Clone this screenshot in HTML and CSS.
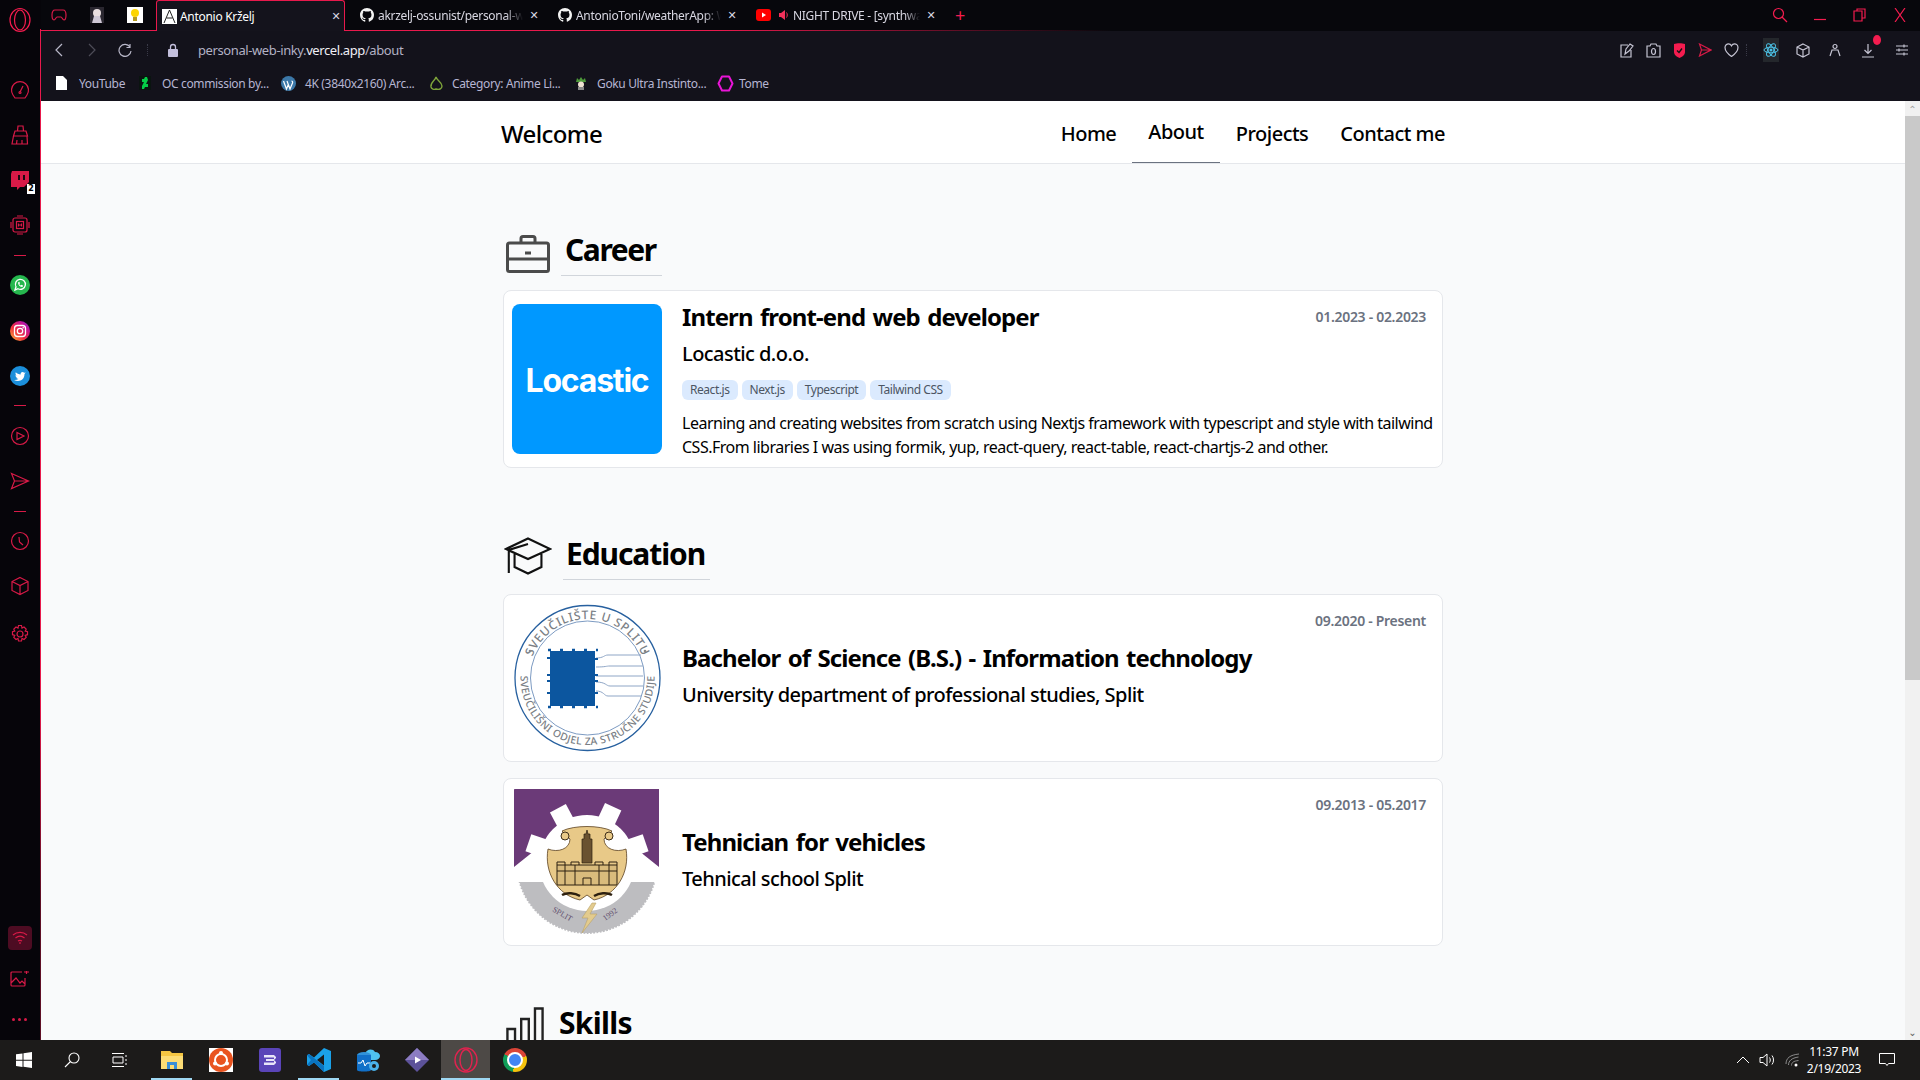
FILE: index.html
```html
<!DOCTYPE html>
<html lang="en">
<head>
<meta charset="utf-8">
<title>Antonio Krželj</title>
<link rel="stylesheet" href="styles.css">
</head>
<body>
<div class="desktop">
  <aside class="sidebar">
    <div class="side-logo"><svg width="24" height="26" viewBox="0 0 24 26" class="ic-p"><ellipse cx="12" cy="13" rx="10" ry="11.5"/><ellipse cx="12" cy="13" rx="5.5" ry="10"/></svg></div>
    <div class="side-group">
      <div class="side-item"><svg width="20" height="20" viewBox="0 0 20 20" class="ic-d"><path d="M3 15a8.500 8.500 0 1 1 14 0l-2 3H5z"/><path d="M10 12l3-6"/><circle cx="10" cy="12.500" r="1"/></svg></div>
      <div class="side-item"><svg width="20" height="20" viewBox="0 0 20 20" class="ic-d"><path d="M8 1h5l.5 5H7.500zM5 6h11l1.500 5H3.500zM3.500 11L2 19h15.500l-.5-8M7 15l-.5 4M12 15v4"/></svg></div>
      <div class="side-item"><svg width="22" height="22" viewBox="0 0 22 22" class="ic-f"><path d="M3 2h17v11l-5 5h-4l-3 3v-3H2V5z"/><path d="M10 6v5M15 6v5" class="ic-cut"/></svg><span class="side-badge">2</span></div>
      <div class="side-item"><svg width="20" height="20" viewBox="0 0 20 20" class="ic-d"><rect x="3" y="3" width="14" height="14" rx="2"/><rect x="6.500" y="6.500" width="7" height="7"/><path d="M8.500 8.500v3M11.500 8.500v3M8.500 10h3M1 7v6M19 7v6M7 1h6M7 19h6"/></svg></div>
      <div class="side-rule"></div>
      <div class="side-item"><svg width="20" height="20" viewBox="0 0 20 20"><circle cx="10" cy="10" r="10" fill="#25b74e"/><path d="M5 15l1-3.300a5 5 0 1 1 2 2z" fill="none" stroke="#fff" stroke-width="1.300"/><path d="M8 7.500c0 2.500 2 4.500 4.500 4.500l.5-1.500-1.500-.7-.7.7c-.7-.3-1.200-.8-1.500-1.500l.7-.7L9.300 6.800z" fill="#fff"/></svg></div>
      <div class="side-item"><svg width="20" height="20" viewBox="0 0 20 20"><defs><linearGradient id="ig" x1="0" y1="1" x2="1" y2="0"><stop offset="0" stop-color="#fdc13a"/><stop offset=".4" stop-color="#f0303c"/><stop offset=".75" stop-color="#c3139a"/><stop offset="1" stop-color="#6a35d0"/></linearGradient></defs><circle cx="10" cy="10" r="10" fill="url(#ig)"/><rect x="4.500" y="4.500" width="11" height="11" rx="3" fill="none" stroke="#fff" stroke-width="1.300"/><circle cx="10" cy="10" r="2.700" fill="none" stroke="#fff" stroke-width="1.300"/><circle cx="13.200" cy="6.800" r=".8" fill="#fff"/></svg></div>
      <div class="side-item"><svg width="20" height="20" viewBox="0 0 20 20"><circle cx="10" cy="10" r="10" fill="#1b8fdb"/><path d="M4 14c5 2.500 10.500 0 10.500-6l1.200-1.500-1.600.3c-1-1.300-3.600-.8-3.500 1.600-1.800 0-3.500-.8-4.800-2.200-.6 1.200-.3 2.500.7 3.200l-1.100-.2c0 1.200.8 2 1.900 2.400h-1c.4 1 1.200 1.400 2.200 1.500-1.200.8-2.800 1-4.500.9z" fill="#fff"/></svg></div>
      <div class="side-rule"></div>
      <div class="side-item"><svg width="20" height="20" viewBox="0 0 20 20" class="ic-d"><circle cx="10" cy="10" r="8.500"/><path d="M7 6.500l7 3.500-7 3.500z"/></svg></div>
      <div class="side-item"><svg width="20" height="20" viewBox="0 0 20 20" class="ic-d"><path d="M1.500 2.500l17 7.500-17 7.500 3-7.500zM4.500 10h14"/></svg></div>
      <div class="side-rule"></div>
      <div class="side-item"><svg width="20" height="20" viewBox="0 0 20 20" class="ic-d"><circle cx="10" cy="10" r="8.500"/><path d="M9 6l.5 5 3.500 3"/></svg></div>
      <div class="side-item"><svg width="20" height="20" viewBox="0 0 20 20" class="ic-d"><path d="M10 1.500l8 4v9l-8 4-8-4v-9zM2 5.500l8 4 8-4M10 9.500v9"/></svg></div>
      <div class="side-item"><svg width="20" height="20" viewBox="0 0 20 20" class="ic-d"><circle cx="10" cy="10" r="3"/><path d="M8.500 1.500h3l.5 2.500 2-1 2.200 2.200-1 2 2.300.5v3l-2.300.6 1 2-2.200 2.200-2-1-.5 2.500h-3l-.5-2.500-2 1-2.200-2.200 1-2-2.300-.6v-3l2.300-.5-1-2L6 3l2 1z"/></svg></div>
    </div>
    <div class="side-bottom">
      <div class="side-wifi"><svg width="16" height="14" viewBox="0 0 16 14" class="ic-d"><path d="M1 4c4-3.500 10-3.500 14 0M3.500 7c3-2.500 6-2.500 9 0M6 10c1.500-1 2.500-1 4 0M8 11v2"/></svg></div>
      <div class="side-pic"><svg width="20" height="16" viewBox="0 0 20 16" class="ic-d"><path d="M12 1H2a1 1 0 0 0-1 1v12a1 1 0 0 0 1 1h12a1 1 0 0 0 1-1V7M1 12l5-5 4 5 2-2 3 3M14 1h5M16.500 0v3"/></svg></div>
      <div class="side-dots"><i></i><i></i><i></i></div>
    </div>
  </aside>

  <div class="browser">
    <div class="tabstrip">
      <div class="pin pin-1"><svg width="16" height="12" viewBox="0 0 16 12" class="ic-d"><path d="M4 1h8c2 0 3 2 3 5s-.5 5-2 5-2-3-3-3H6c-1 0-1.500 3-3 3S1 9 1 6s1-5 3-5z"/></svg></div>
      <div class="pin pin-2"><svg width="14" height="16" viewBox="0 0 14 16"><rect width="14" height="16" fill="#2a2730"/><circle cx="7" cy="6" r="4" fill="#e9dfe0"/><path d="M2 16l2-7h6l2 7z" fill="#cfc8d6"/></svg></div>
      <div class="pin pin-3"><svg width="16" height="16" viewBox="0 0 16 16"><rect width="16" height="16" fill="#fff"/><circle cx="8" cy="6" r="4" fill="#fdd500"/><rect x="6" y="10" width="4" height="4" fill="#b59a20"/></svg></div>
      <div class="tab tab-active">
        <svg width="15" height="15" viewBox="0 0 15 15"><rect width="15" height="15" fill="#fff"/><path d="M2 14L7.500 1 13 14M4.500 9h6" fill="none" stroke="#222" stroke-width="1"/></svg>
        <span class="tab-title">Antonio Krželj</span><span class="tab-x">✕</span>
      </div>
      <div class="tab">
        <svg width="14" height="14" viewBox="0 0 16 16" class="gh"><path d="M8 0C3.580 0 0 3.580 0 8c0 3.540 2.290 6.530 5.470 7.590.4.07.55-.17.55-.38 0-.19-.01-.82-.01-1.490-2.010.37-2.530-.49-2.690-.94-.09-.23-.48-.94-.82-1.130-.28-.15-.68-.52-.01-.53.63-.01 1.080.58 1.230.82.72 1.210 1.870.87 2.330.66.07-.52.28-.87.51-1.070-1.780-.2-3.640-.89-3.640-3.950 0-.87.31-1.590.82-2.150-.08-.2-.36-1.020.08-2.120 0 0 .67-.21 2.200.82.64-.18 1.320-.27 2-.27.68 0 1.360.09 2 .27 1.530-1.040 2.200-.82 2.200-.82.44 1.100.16 1.920.08 2.120.51.56.82 1.270.82 2.150 0 3.070-1.870 3.750-3.650 3.950.29.25.54.73.54 1.480 0 1.070-.01 1.930-.01 2.200 0 .21.15.46.55.38A8.013 8.013 0 0 0 16 8c0-4.420-3.580-8-8-8z"/></svg>
        <span class="tab-title">akrzelj-ossunist/personal-w</span><span class="tab-x">✕</span>
      </div>
      <div class="tab">
        <svg width="14" height="14" viewBox="0 0 16 16" class="gh"><path d="M8 0C3.580 0 0 3.580 0 8c0 3.540 2.290 6.530 5.470 7.590.4.07.55-.17.55-.38 0-.19-.01-.82-.01-1.490-2.010.37-2.530-.49-2.690-.94-.09-.23-.48-.94-.82-1.130-.28-.15-.68-.52-.01-.53.63-.01 1.080.58 1.230.82.72 1.210 1.870.87 2.330.66.07-.52.28-.87.51-1.070-1.780-.2-3.640-.89-3.640-3.950 0-.87.31-1.590.82-2.150-.08-.2-.36-1.020.08-2.120 0 0 .67-.21 2.200.82.64-.18 1.320-.27 2-.27.68 0 1.360.09 2 .27 1.530-1.040 2.200-.82 2.200-.82.44 1.100.16 1.920.08 2.120.51.56.82 1.270.82 2.150 0 3.070-1.870 3.750-3.650 3.950.29.25.54.73.54 1.480 0 1.070-.01 1.930-.01 2.200 0 .21.15.46.55.38A8.013 8.013 0 0 0 16 8c0-4.420-3.580-8-8-8z"/></svg>
        <span class="tab-title">AntonioToni/weatherApp: W</span><span class="tab-x">✕</span>
      </div>
      <div class="tab tab-media">
        <svg width="15" height="12" viewBox="0 0 15 12"><rect width="15" height="12" rx="3" fill="#f00"/><path d="M6 3.500l4 2.500-4 2.500z" fill="#fff"/></svg>
        <svg class="tab-spk" width="10" height="12" viewBox="0 0 10 12"><path d="M0 4h2l4-3v10L2 8H0z" fill="#f4305a"/><path d="M7.500 3.500c1 1.500 1 3.500 0 5" fill="none" stroke="#f4305a"/></svg>
        <span class="tab-title">NIGHT DRIVE - [synthwa</span><span class="tab-x">✕</span>
      </div>
      <span class="tab-add">+</span>
      <div class="win">
        <svg width="16" height="16" viewBox="0 0 16 16" class="ic-p win-search"><circle cx="6.500" cy="6.500" r="5"/><path d="M10 10l5 5"/></svg>
        <svg width="12" height="12" viewBox="0 0 12 12" class="ic-p win-min"><path d="M0 10.500h12"/></svg>
        <svg width="14" height="14" viewBox="0 0 14 14" class="ic-p win-res"><path d="M4 3V1h8v9h-3M1 3h8v10H1z"/></svg>
        <svg width="14" height="14" viewBox="0 0 14 14" class="ic-p win-close"><path d="M2 0l10 14M12 0L2 14"/></svg>
      </div>
    </div>

    <div class="toolbar">
      <div class="tb-btn"><svg width="10" height="16" viewBox="0 0 10 16" class="ic-g"><path d="M8 2L2 8l6 6"/></svg></div>
      <div class="tb-btn tb-off"><svg width="10" height="16" viewBox="0 0 10 16" class="ic-g"><path d="M2 2l6 6-6 6"/></svg></div>
      <div class="tb-btn"><svg width="14" height="14" viewBox="0 0 14 14" class="ic-g"><path d="M12 4a6 6 0 1 0 1 4M12 1v3.500H8.500"/></svg></div>
      <div class="tb-sep"></div>
      <div class="tb-lock"><svg width="12" height="14" viewBox="0 0 12 14"><rect x="1" y="6" width="10" height="8" rx="1" fill="#c3bfdc"/><path d="M3.500 6V4a2.500 2.500 0 0 1 5 0v2" fill="none" stroke="#c3bfdc" stroke-width="1.300"/></svg></div>
      <div class="url">personal-web-inky.<b>vercel.app</b>/about</div>
      <div class="tb-right">
        <div class="tb-icon"><svg width="14" height="16" viewBox="0 0 14 16" class="ic-w"><path d="M8 3H1v12h10V8M5 12l1-5 4-5 3 2-4 5z"/></svg></div>
        <div class="tb-icon"><svg width="15" height="15" viewBox="0 0 15 15" class="ic-w"><path d="M1 3h3l1-2h5l1 2h3v11H1z"/><ellipse cx="7.500" cy="8.500" rx="2" ry="3"/></svg></div>
        <div class="tb-icon"><svg width="13" height="15" viewBox="0 0 13 15"><path d="M1 1c3-1 8-1 11 0v8c0 3-3 5-5.500 6C4 14 1 12 1 9z" fill="#f41c4f"/><path d="M4 7.500l2 2 3-4" fill="none" stroke="#111" stroke-width="1.400"/></svg></div>
        <div class="tb-icon"><svg width="14" height="14" viewBox="0 0 14 14" class="ic-d"><path d="M1.500 1l11.500 6-11.500 6 2-6zM3.500 7H13"/></svg></div>
        <div class="tb-icon"><svg width="15" height="14" viewBox="0 0 15 14" class="ic-w"><path d="M7.500 13.500C4 11 1 8 1 4.500 1 2 3 .8 4.500.8c1.300 0 2.400.8 3 2 .6-1.200 1.700-2 3-2C12 .8 14 2 14 4.500c0 3.500-3 6.500-6.500 9z"/></svg></div>
        <div class="tb-dotsep"></div>
        <div class="tb-icon tb-icon-wide"><span class="react"><svg width="16" height="16" viewBox="0 0 16 16"><g fill="none" stroke="#4cc3e8" stroke-width="1"><ellipse cx="8" cy="8" rx="7" ry="2.800"/><ellipse cx="8" cy="8" rx="7" ry="2.800" transform="rotate(60 8 8)"/><ellipse cx="8" cy="8" rx="7" ry="2.800" transform="rotate(120 8 8)"/></g><circle cx="8" cy="8" r="1.500" fill="#4cc3e8"/></svg></span></div>
        <div class="tb-icon tb-icon-wide"><svg width="14" height="15" viewBox="0 0 14 15" class="ic-w"><path d="M7 1l6 3v7l-6 3-6-3V4zM1 4l6 3 6-3M7 7v7"/></svg></div>
        <div class="tb-icon tb-icon-wide"><svg width="12" height="14" viewBox="0 0 12 14" class="ic-w"><circle cx="6" cy="3.500" r="2"/><path d="M1 13l2-6h6l2 6"/></svg></div>
        <div class="tb-icon tb-icon-wide tb-dl"><svg width="14" height="15" viewBox="0 0 14 15" class="ic-w"><path d="M7 1v9M3.500 7L7 10.500 10.500 7M1 14h12"/></svg><span class="dl-dot"></span></div>
        <div class="tb-icon tb-icon-wide tb-last"><svg width="14" height="12" viewBox="0 0 14 12" class="ic-w"><path d="M1 2h12M1 6h12M1 10h12M9 .5v3M4 4.500v3M9 8.500v3"/></svg></div>
      </div>
    </div>

    <div class="bookmarks">
      <a class="bm bm-1"><svg width="11" height="14" viewBox="0 0 11 14"><path d="M0 0h7l4 4v10H0z" fill="#fff"/></svg><span>YouTube</span></a>
      <a class="bm bm-2"><svg width="12" height="14" viewBox="0 0 12 14"><rect width="12" height="14" fill="#0a1410"/><path d="M8 1H6L5 3H3v3h2L3 10v3h2l1-2h3V8H7l2-4z" fill="#05cc47"/></svg><span>OC commission by...</span></a>
      <a class="bm bm-3"><svg width="15" height="15" viewBox="0 0 15 15"><circle cx="7.500" cy="7.500" r="7.500" fill="#3c78a8"/><path d="M2.500 5l3 8 1.800-4.500L6 5M6 5l3 8 2.500-6c.5-1-.2-2-1-2" fill="none" stroke="#fff" stroke-width="1.200"/></svg><span>4K (3840x2160) Arc...</span></a>
      <a class="bm bm-4"><svg width="15" height="15" viewBox="0 0 15 15"><path d="M7 1c-1 4-6 5-5 10 .5 2 3 3 5 2 3 1 6 0 6-3 0-4-5-5-6-9z" fill="none" stroke="#7ea43a" stroke-width="1.400"/></svg><span>Category: Anime Li...</span></a>
      <a class="bm bm-5"><svg width="14" height="14" viewBox="0 0 14 14"><path d="M2 6l1-4 2 2 2-3 2 3 2-2 1 4z" fill="#4e9a3a"/><circle cx="7" cy="8.500" r="3" fill="#efe2d2"/><rect x="4" y="11" width="6" height="3" fill="#8a8a8a"/></svg><span>Goku Ultra Instinto...</span></a>
      <a class="bm bm-6"><svg width="17" height="17" viewBox="0 0 17 17"><path d="M5 1.500h7l3.500 7-3.500 7H5l-3.500-7z" fill="none" stroke="#e815d6" stroke-width="2" stroke-linejoin="round"/></svg><span>Tome</span></a>
    </div>

    <div class="viewport">
      <div class="page">
        <header class="nav">
          <div class="nav-inner">
            <div class="brand">Welcome</div>
            <nav class="links">
              <a class="link">Home</a>
              <a class="link link-active">About</a>
              <a class="link">Projects</a>
              <a class="link">Contact me</a>
            </nav>
          </div>
        </header>
        <main class="content">
          <section class="section">
            <div class="heading">
              <svg class="h-icon" width="44" height="38" viewBox="0 0 44 38" fill="none" stroke="#4b4b4b" stroke-width="3"><rect x="1.500" y="8" width="41" height="28.500" rx="2"/><path d="M1.500 24h41M15 8V3.500a2 2 0 0 1 2-2h10a2 2 0 0 1 2 2V8M19 18h6"/></svg>
              <h2 class="title title-career">Career</h2>
            </div>
            <article class="card card-job">
              <div class="thumb thumb-blue"><svg width="150" height="150" viewBox="0 0 150 150"><text x="75" y="88" class="locastic" text-anchor="middle">Locastic</text></svg></div>
              <div class="body body-job">
                <h3 class="job">Intern front-end web developer</h3>
                <p class="org">Locastic d.o.o.</p>
                <ul class="tags"><li class="tag">React.js</li><li class="tag">Next.js</li><li class="tag">Typescript</li><li class="tag">Tailwind CSS</li></ul>
                <p class="desc">Learning and creating websites from scratch using Nextjs framework with typescript and style with tailwind CSS.From libraries I was using formik, yup, react-query, react-table, react-chartjs-2 and other.</p>
              </div>
              <span class="date">01.2023 - 02.2023</span>
            </article>
          </section>

          <section class="section">
            <div class="heading">
              <svg class="h-icon h-icon-edu" width="48" height="38" viewBox="0 0 50 38" preserveAspectRatio="none" fill="none" stroke="#111" stroke-width="2.200"><path d="M25 1.500L48 12 25 22 2 12zM11 17v13l14 6.500L39 30V17M25 7L5 13v23"/></svg>
              <h2 class="title title-edu">Education</h2>
            </div>
            <article class="card">
              <div class="thumb">
                <svg width="150" height="150" viewBox="0 0 150 150">
                  <defs>
                    <path id="arcTop" d="M20.100 54.800A59 59 0 0 1 130.900 54.800"/>
                    <path id="arcBot" d="M10.500 58.800A67 67 0 1 0 140.500 58.800"/>
                  </defs>
                  <circle cx="75.500" cy="75" r="72.500" fill="#fff" stroke="#27609f" stroke-width="1.300"/>
                  <circle cx="75.500" cy="75" r="57" fill="none" stroke="#5c82b3" stroke-width=".8"/>
                  <text class="seal seal-top" text-anchor="middle"><textPath href="#arcTop" startOffset="50%">SVEUČILIŠTE U SPLITU</textPath></text>
                  <text class="seal" text-anchor="middle"><textPath href="#arcBot" startOffset="50%">SVEUČILIŠNI ODJEL ZA STRUČNE STUDIJE</textPath></text>
                  <circle cx="18" cy="48" r="1.300" fill="#888"/><circle cx="133" cy="48" r="1.300" fill="#888"/>
                  <path d="M84 55c8 0 8-3 12-3h33M84 64c10 0 10-1 14-1h33M84 73h47M84 79c10 0 10 4 14 4h33M84 88c8 0 8 5 12 5h33" fill="none" stroke="#8fa6c6" stroke-width="1"/>
                  <rect x="38" y="48" width="45" height="55" fill="#0c569f"/>
                  <path d="M36 47h50M36 104h50" stroke="#0c569f" stroke-width="2.500" stroke-dasharray="3 9"/>
                  <path d="M35 55h5M35 72h5M35 78h5M35 90h5M81 56h5M81 72h5M81 78h5M81 90h5" stroke="#0c569f" stroke-width="2"/>
                </svg>
              </div>
              <div class="body body-edu">
                <h3 class="job">Bachelor of Science (B.S.) - Information technology</h3>
                <p class="org">University department of professional studies, Split</p>
              </div>
              <span class="date">09.2020 - Present</span>
            </article>
            <article class="card card-next">
              <div class="thumb">
                <svg width="150" height="150" viewBox="0 0 150 150">
                  <rect x="2" y="2" width="145" height="78" fill="#6b3a78"/>
                  <path d="M2 80L22 64l24 16zM147 80l-20-16-24 16z" fill="#fff"/>
                  <path d="M6.600 95H143.400A71 71 0 0 1 6.600 95z" fill="#bdbdc0"/>
                  <path d="M143.400 95A71 71 0 0 1 6.600 95" fill="none" stroke="#fff" stroke-width="2" stroke-dasharray="1.500 1.800"/>
                  <g fill="#fff">
                    <circle cx="75" cy="76" r="48"/>
                    <rect x="66" y="14" width="18" height="24" transform="rotate(-28 75 76)"/>
                    <rect x="66" y="14" width="18" height="24" transform="rotate(25 75 76)"/>
                    <rect x="66" y="14" width="18" height="24" transform="rotate(-71 75 76)"/>
                    <rect x="66" y="14" width="18" height="24" transform="rotate(71 75 76)"/>
                  </g>
                  <path d="M50 44C62 38 88 38 100 44L92 52C92 62 104 66 114 62 118 85 105 108 82 113L75 108 68 113C45 108 32 85 36 62 46 66 58 62 58 52z" fill="#e8c988" stroke="#5a4020" stroke-width=".8"/>
                  <circle cx="53" cy="49" r="4" fill="#e8c988" stroke="#3d2d18"/><circle cx="97" cy="49" r="4" fill="#e8c988" stroke="#3d2d18"/>
                  <path d="M70 76V52h2v-5h2l1-4 1 4h2v5h2v24z" fill="#6a5230" stroke="#2d2010" stroke-width=".7"/>
                  <path d="M45 78h60v20H45z" fill="#d9bb7c" stroke="#2d2010" stroke-width="1"/>
                  <path d="M45 78v-3h8v3M59 78v-3h8v3M83 78v-3h8v3M97 78v-3h8v3M53 78v20M63 78v20M87 78v20M97 78v20M45 84h60M71 98v-7h8v7" fill="none" stroke="#2d2010" stroke-width="1"/>
                  <path d="M50 108c5-3 13-2 18 1M100 108c-5-3-13-2-18 1" stroke="#2d2010" stroke-width="2.500" fill="none"/>
                  <path d="M80 116l-10 15h6l-6 15 15-19h-7l6-11z" fill="#e3cb8e" stroke="#b9a36a" stroke-width=".6"/>
                  <text x="40" y="124" class="tiny" transform="rotate(30 40 124)">SPLIT</text>
                  <text x="93" y="134" class="tiny" transform="rotate(-35 93 134)">1992</text>
                </svg>
              </div>
              <div class="body body-edu">
                <h3 class="job">Tehnician for vehicles</h3>
                <p class="org">Tehnical school Split</p>
              </div>
              <span class="date">09.2013 - 05.2017</span>
            </article>
          </section>

          <section class="section section-skills">
            <div class="heading heading-skills">
              <svg class="h-icon h-icon-skills" width="38" height="36" viewBox="0 0 40 36" preserveAspectRatio="none" fill="none" stroke="#222" stroke-width="2.500"><rect x="1.500" y="22" width="8" height="20"/><rect x="16" y="12" width="8" height="30"/><rect x="30.500" y="1.500" width="8" height="40"/></svg>
              <h2 class="title title-skills">Skills</h2>
            </div>
          </section>
        </main>
      </div>
      <div class="scrollbar">
        <div class="sb-arrow">⌃</div>
        <div class="sb-thumb"></div>
        <div class="sb-track"></div>
        <div class="sb-arrow sb-arrow-down">⌄</div>
      </div>
    </div>
  </div>
</div>

<footer class="taskbar">
  <div class="task"><svg width="16" height="16" viewBox="0 0 16 16"><path d="M0 2.300l6.500-.9v6.300H0zM7.500 1.300L16 0v7.700H7.500zM0 8.700h6.500V15L0 14.100zM7.500 8.700H16V16l-8.500-1.200z" fill="#fff"/></svg></div>
  <div class="task"><svg width="16" height="16" viewBox="0 0 16 16" fill="none" stroke="#fff" stroke-width="1.100"><circle cx="10" cy="6" r="5"/><path d="M6.500 9.500L1 15"/></svg></div>
  <div class="task"><svg width="16" height="16" viewBox="0 0 16 16" fill="none" stroke="#fff"><path d="M0 1.500h12M0 14.500h12M1 5h10v6H1zM14 3v2M14 7v2M14 11v2"/></svg></div>
  <div class="task task-on"><svg width="22" height="20" viewBox="0 0 22 20"><path d="M0 1h9l2 2h11v16H0z" fill="#f5c643"/><path d="M0 6h22v13H0z" fill="#fcdc75"/><path d="M6 12h10v7H6z" fill="#3a8fd8"/><path d="M9 15h4v4H9z" fill="#fcdc75"/></svg></div>
  <div class="task"><svg width="24" height="24" viewBox="0 0 24 24"><rect width="24" height="24" fill="#fff"/><circle cx="12" cy="12" r="12" fill="#e95420"/><circle cx="12" cy="12" r="6" fill="none" stroke="#fff" stroke-width="2"/><circle cx="12" cy="5" r="2" fill="#fff"/><circle cx="6" cy="15.500" r="2" fill="#fff"/><circle cx="18" cy="15.500" r="2" fill="#fff"/></svg></div>
  <div class="task"><svg width="22" height="24" viewBox="0 0 22 24"><rect width="22" height="24" rx="3" fill="#5a44b8"/><path d="M5 7h10l2 2v1l-2 2 2 2v1l-2 2H5v-2.500h10V13H7v-2h8V9.500H5z" fill="#e8e4f8"/></svg></div>
  <div class="task task-on"><svg width="24" height="24" viewBox="0 0 24 24"><path d="M17 0l7 3v18l-7 3-10-9.500L2 18l-2-1.200V7.200L2 6l5 3.500z" fill="#1aa1e8"/><path d="M17 6.500L10 12l7 5.500z" fill="#1c1b1a"/><path d="M0 7.200L2 6l15 12v6L7 14.500 2 18l-2-1.200 4-4.800z" fill="#0a74c0"/></svg></div>
  <div class="task"><svg width="24" height="26" viewBox="0 0 24 26"><path d="M9 7c1-5 8-6 10-2 3 0 5 2 5 4s-2 4-5 4H9z" fill="#4fc3f0"/><ellipse cx="8" cy="8" rx="7" ry="3" fill="#3192d8"/><path d="M1 8h14v15c0 2-14 2-14 0z" fill="#1170c8"/><path d="M2 16h3l2-3 2 6 2-3h3" fill="none" stroke="#fff" stroke-width="1"/><circle cx="18" cy="19" r="5" fill="#4ab1e8"/><circle cx="18" cy="19" r="2" fill="#1c1b1a"/></svg></div>
  <div class="task"><svg width="24" height="24" viewBox="0 0 24 24"><path d="M12 0l12 12-12 12L0 12z" fill="#5c5299"/><path d="M12 0l12 12H0z" fill="#8c7cc2"/><path d="M10 8.500l6 3.500-6 3.500z" fill="#fff"/></svg></div>
  <div class="task task-active"><svg width="24" height="26" viewBox="0 0 24 26" fill="none" stroke="#e0234f" stroke-width="1.400"><ellipse cx="12" cy="13" rx="11" ry="12"/><ellipse cx="12" cy="13" rx="6" ry="10.500"/></svg></div>
  <div class="task"><span class="chrome"><span class="chrome-dot"></span></span></div>
  <div class="tray">
    <svg width="14" height="8" viewBox="0 0 14 8" fill="none" stroke="#fff"><path d="M1 7l6-6 6 6"/></svg>
    <svg class="tray-vol" width="18" height="14" viewBox="0 0 18 14" fill="none" stroke="#fff"><path d="M1 4.500h3l4-3.500v12l-4-3.500H1zM10.500 4.500c1 1.500 1 3.500 0 5M13 2.500c2 2.500 2 6.500 0 9"/></svg>
    <svg class="tray-wifi" width="16" height="14" viewBox="0 0 16 14" fill="none" stroke="#8b8b8b"><path d="M1 11c0-6 4-9 13-10M3.500 12c0-4 3-7 10-8M6.500 12.500c0-3 2-4.500 7-5"/><circle cx="11" cy="12" r="1.500" fill="#fff" stroke="none"/></svg>
    <div class="clock"><span>11:37 PM</span><span>2/19/2023</span></div>
    <svg class="tray-msg" width="16" height="14" viewBox="0 0 16 14" fill="none" stroke="#fff"><path d="M.5.500h15v10H9.500L8 12.500 6.500 10.500H.5z"/></svg>
  </div>
</footer>
</body>
</html>
```

FILE: styles.css
```css
* { box-sizing: border-box; }
html, body { height: 100%; }
body {
  margin: 0;
  height: 100vh;
  overflow: hidden;
  display: flex;
  flex-direction: column;
  font-family: "Noto Sans", "Open Sans", sans-serif;
  background: #07070c;
}
h2, h3, p, ul { margin: 0; padding: 0; }
ul { list-style: none; }
svg { display: block; flex: none; }

/* stroke helpers */
.ic-p, .ic-d, .ic-g, .ic-w { fill: none; stroke-width: 1.200; }
.ic-p { stroke: #f41c4f; }
.ic-d { stroke: #d81a47; }
.ic-g { stroke: #b9b8c9; }
.ic-w { stroke: #c6c5d4; }
.ic-f { fill: #d81a47; }
.ic-cut { stroke: #07070c; stroke-width: 1.800; fill: none; }

.desktop { flex: 1; min-height: 0; display: flex; }

/* sidebar */
.sidebar {
  width: 41px;
  flex: none;
  display: flex;
  flex-direction: column;
  align-items: center;
  background: #06050a;
  padding-right: 1px;
  border-right: 1px solid;
  border-image: linear-gradient(to bottom, transparent 30px, #e8194c 30px, #e8194c 700px, #5e0f25 900px, #5e0f25 100%) 1;
}
.side-logo { height: 40px; width: 100%; display: flex; align-items: center; justify-content: center; margin-bottom: 27px; }
.side-group { width: 100%; display: flex; flex-direction: column; }
.side-item { height: 45.200px; display: flex; align-items: center; justify-content: center; position: relative; }
.side-item:last-child { margin-top: 2px; }
.side-rule { width: 12px; height: 1px; background: #d81a47; margin: 7px auto; }
.side-badge {
  position: absolute; left: 27px; top: 27px;
  width: 8px; height: 10px; background: #fff; color: #000;
  font: 700 8px/10px "DejaVu Sans", sans-serif; text-align: center;
}
.side-bottom { margin-top: auto; width: 100%; display: flex; flex-direction: column; align-items: center; padding-bottom: 19px; }
.side-wifi { width: 24px; height: 24px; border-radius: 4px; background: #4d0c22; display: flex; align-items: center; justify-content: center; margin-bottom: 21px; }
.side-pic { height: 16px; margin-bottom: 31px; }
.side-dots { display: flex; gap: 3px; }
.side-dots i { width: 3px; height: 3px; border-radius: 50%; background: #d81a47; }

/* browser chrome */
.browser { flex: 1; min-width: 0; display: flex; flex-direction: column; }
.tabstrip {
  height: 31px; flex: none; display: flex; align-items: center;
  background: #07070c;
  border-bottom: 1px solid;
  border-image: linear-gradient(to right, #e8194c 0, #e8194c 36%, transparent 57%) 1;
  color: #d8d7e2;
  font-size: 12px;
  letter-spacing: -.3px;
}
.pin { display: flex; align-items: center; justify-content: center; flex: none; height: 30px; }
.pin-1 { width: 36px; }
.pin-2 { width: 39px; }
.pin-3 { width: 38px; }
.tab { width: 198px; height: 30px; display: flex; align-items: center; gap: 4px; padding: 0 9px 0 8px; flex: none; }
.tab-active {
  width: 189px; height: 31px; margin-left: 2px; margin-bottom: -1px; margin-right: 7px;
  gap: 3px;
  padding: 0 1px 0 5px;
  background: #14131c; color: #fff;
  border: 1px solid #e8194c; border-bottom: 0; border-radius: 3px 3px 0 0;
}
.tab-media { gap: 4px; padding-right: 8px; }
.tab-spk { margin-left: 4px; }
.tab-title { flex: 1; min-width: 0; overflow: hidden; white-space: nowrap; -webkit-mask-image: linear-gradient(to right, #000 88%, transparent); mask-image: linear-gradient(to right, #000 88%, transparent); }
.tab-active .tab-title { -webkit-mask-image: none; mask-image: none; }
.tab-x { width: 14px; font: 11px/1 "DejaVu Sans", sans-serif; text-align: center; color: #d8d7e2; }
.gh { fill: #f2f2f2; }
.tab-add { color: #f41c4f; font-size: 18px; line-height: 1; margin-left: 9px; }
.win { margin-left: auto; display: flex; align-items: center; }
.win-search { margin-right: 26px; }
.win-min { margin-right: 27px; }
.win-res { margin-right: 26px; }
.win-close { margin-right: 13px; }

.toolbar {
  height: 38px; flex: none; display: flex; align-items: center;
  background: #13121b; padding-left: 1px;
}
.tb-btn { width: 33px; display: flex; justify-content: center; }
.tb-off { opacity: .35; }
.tb-sep { width: 1px; height: 12px; margin-left: 6px; border-left: 1px dotted #3a3a48; }
.tb-lock { margin-left: 19px; }
.url { margin-left: 19px; color: #b2b1c4; font-size: 13px; letter-spacing: -.4px; }
.url b { font-weight: 400; color: #f0eff6; }
.tb-right { margin-left: auto; display: flex; align-items: center; padding-right: 2px; }
.tb-icon { width: 26px; display: flex; justify-content: center; position: relative; }
.tb-icon-wide { width: 32px; }
.tb-dl { margin-left: 1px; }
.tb-last { margin-left: 2px; }
.tb-dotsep { width: 1px; height: 12px; margin: 0 8px 0 2px; border-left: 1px dotted #3a3a48; }
.react { background: #24272c; width: 16px; height: 24px; display: flex; align-items: center; }
.dl-dot { position: absolute; top: -8px; left: 21px; width: 8px; height: 10px; border-radius: 50%; background: #f41c4f; }

.bookmarks {
  height: 32px; flex: none; display: flex; align-items: center;
  background: #13121b; padding-left: 15px; padding-bottom: 4px;
  color: #b6b5d2; font-size: 12px; letter-spacing: -.35px;
}
.bm { display: flex; align-items: center; gap: 12px; white-space: nowrap; }
.bm-1 { width: 83px; }
.bm-2 { width: 142px; gap: 11px; }
.bm-3 { width: 148px; gap: 9px; }
.bm-4 { width: 145px; gap: 8px; }
.bm-5 { width: 143px; gap: 9px; }
.bm-6 { gap: 5px; }

/* page */
.viewport { flex: 1; min-height: 0; display: flex; background: #f9fafb; }
.page { flex: 1; min-width: 0; overflow: hidden; color: #000; }
.nav { height: 63px; background: #fff; border-bottom: 1px solid #e5e7eb; }
.nav-inner { width: 944px; height: 100%; margin: 0 auto; display: flex; align-items: center; justify-content: space-between; }
.brand { font-size: 24px; font-weight: 500; letter-spacing: -.6px; padding-top: 3px; }
.links { display: flex; height: 100%; margin-right: -16px; }
.link { display: flex; align-items: center; padding: 2px 16px 0; font-size: 20px; font-weight: 500; letter-spacing: -.5px; }
.link-active { padding: 0 16px 1px; border-bottom: 1px solid #6b7280; height: 62px; }

.content { width: 940px; margin: 0 auto; }
.section { padding-top: 64px; }
.heading { height: 48px; display: flex; align-items: flex-end; margin-bottom: 14px; }
.h-icon { margin: 0 0 3px 3px; }
.h-icon-edu { margin: 0 0 5px 1px; }
.title { height: 48px; line-height: 44px; font-size: 30px; font-weight: 700; border-bottom: 1px solid #d1d5db; margin-left: 11px; padding: 0 5px 0 4px; letter-spacing: -1.100px; }
.title-career { letter-spacing: -1.400px; padding-right: 6px; }
.title-edu { margin-left: 11px; padding-left: 3px; }
.section-skills { padding-top: 55px; }
.heading-skills { align-items: flex-start; }
.h-icon-skills { margin: 6px 0 0 3px; }
.title-skills { margin-left: 15px; padding: 0; border: 0; letter-spacing: -.7px; }

.card {
  position: relative;
  display: flex; align-items: center;
  padding: 8px;
  background: #fff;
  border: 1px solid #e5e7eb;
  border-radius: 8px;
}
.card-next { margin-top: 16px; }
.thumb { width: 150px; height: 150px; flex: none; border-radius: 8px; overflow: hidden; }
.thumb-blue { background: #0098ff; }
.locastic { font-family: Inter, sans-serif; font-weight: 700; font-size: 32px; fill: #fff; letter-spacing: -1.200px; }
.seal { font-family: "Noto Sans", sans-serif; font-size: 10.300px; font-weight: 500; fill: #7b7f86; letter-spacing: .4px; }
.seal-top { font-size: 12px; letter-spacing: .7px; }
.tiny { font-family: "Liberation Serif", serif; font-size: 8px; fill: #5f4d6d; }

.body { margin-left: 20px; flex: 1; min-width: 0; }
.body-job { padding-top: 2px; margin-right: -3px; }
.body-edu { padding-bottom: 6px; }
.job { font-size: 24px; line-height: 32px; font-weight: 700; letter-spacing: -.9px; word-spacing: 2px; }
.org { font-size: 20px; line-height: 28px; font-weight: 500; margin-top: 7px; letter-spacing: -.55px; }
.tags { display: flex; gap: 4px; margin-top: 12px; }
.tag { height: 20px; padding: 0 8px; border-radius: 6px; background: #dbeafe; color: #4b5563; font-size: 12px; line-height: 20px; letter-spacing: -.45px; }
.desc { font-size: 16px; line-height: 24px; margin-top: 11px; letter-spacing: -.5px; }
.date { position: absolute; top: 16px; right: 16px; font-size: 14px; line-height: 20px; font-weight: 600; color: #6b7280; letter-spacing: -.3px; }

/* scrollbar */
.scrollbar { width: 15px; flex: none; display: flex; flex-direction: column; background: #f1f1f1; }
.sb-arrow { height: 15px; flex: none; text-align: center; color: #a3a3a3; font: 10px/17px "DejaVu Sans", sans-serif; }
.sb-thumb { height: 564px; flex: none; background: #c9c9c9; }
.sb-track { flex: 1; }
.sb-arrow-down { height: 10px; line-height: 6px; color: #606060; }

/* taskbar */
.taskbar { height: 40px; flex: none; display: flex; align-items: center; background: #1c1b1a; }
.task { width: 49px; height: 40px; display: flex; align-items: center; justify-content: center; position: relative; flex: none; }
.task:nth-child(-n+3) { width: 48px; }
.task:nth-child(3) { margin-right: 3px; }
.task-on::after, .task-active::after { content: ""; position: absolute; left: 4px; right: 4px; bottom: 0; height: 2px; background: #9fd8f3; }
.task-active { background: #4d4946; }
.task-active::after { left: 0; right: 0; }
.chrome { width: 24px; height: 24px; border-radius: 50%; background: conic-gradient(#db4437 0 70deg, #f4c20d 70deg 190deg, #0f9d58 190deg 300deg, #db4437 300deg); display: flex; align-items: center; justify-content: center; }
.chrome-dot { width: 12px; height: 12px; border-radius: 50%; background: #4285f4; border: 2px solid #fff; box-sizing: content-box; }
.tray { margin-left: auto; display: flex; align-items: center; height: 100%; padding-right: 25px; color: #fff; }
.tray-vol { margin-left: 9px; }
.tray-wifi { margin-left: 8px; }
.clock { width: 76px; margin-left: -5px; display: flex; flex-direction: column; align-items: center; font-size: 12px; line-height: 17px; letter-spacing: -.3px; }
.tray-msg { margin-left: 7px; }
```
